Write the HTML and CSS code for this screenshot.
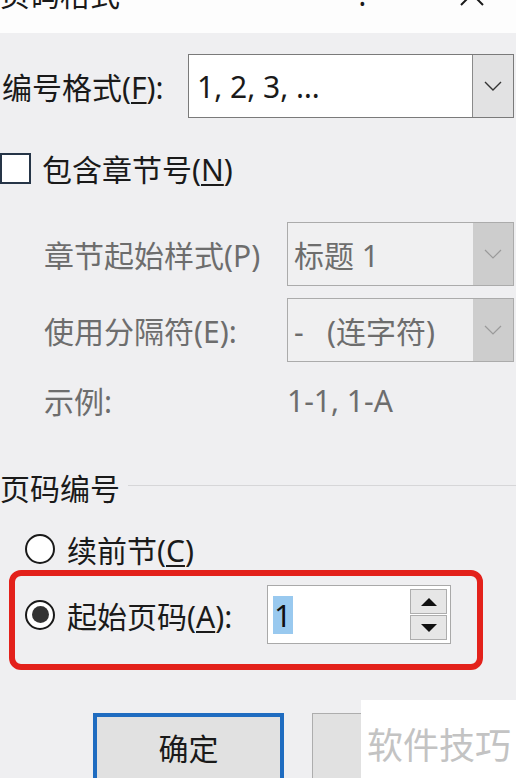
FILE: index.html
```html
<!DOCTYPE html>
<html lang="zh">
<head>
<meta charset="utf-8">
<title>页码格式</title>
<link rel="stylesheet" href="styles.css">
</head>
<body>
<div class="titlebar">
  <span class="title">页码格式</span>
  <span class="help">?</span>
  <span class="close"><svg width="24" height="24" viewBox="0 0 24 24"><path d="M1 1L23 23M23 1L1 23" stroke="#1a1a1a" stroke-width="2" fill="none"/></svg></span>
</div>
<div class="content">
  <div class="row row-format">
    <span class="lbl lbl-format">编号格式(<u>F</u>):</span>
    <div class="select select-main">
      <span class="val">1, 2, 3, …</span>
      <span class="drop drop-main"><svg width="18" height="10" viewBox="0 0 18 10"><path d="M1 1L9 9L17 1" stroke="#333" stroke-width="1.4" fill="none"/></svg></span>
    </div>
  </div>
  <div class="row row-check">
    <span class="checkbox"></span>
    <span class="lbl lbl-check">包含章节号(<u>N</u>)</span>
  </div>
  <div class="row row-sub row-style">
    <span class="lbl lbl-sub">章节起始样式(P)</span>
    <div class="select select-dis">
      <span class="val">标题 1</span>
      <span class="drop drop-dis"><svg width="18" height="10" viewBox="0 0 18 10"><path d="M1 1L9 9L17 1" stroke="#9a9a9a" stroke-width="1.2" fill="none"/></svg></span>
    </div>
  </div>
  <div class="row row-sub row-sep">
    <span class="lbl lbl-sub">使用分隔符(E):</span>
    <div class="select select-dis">
      <span class="val">-&nbsp;&nbsp;&nbsp;(连字符)</span>
      <span class="drop drop-dis"><svg width="18" height="10" viewBox="0 0 18 10"><path d="M1 1L9 9L17 1" stroke="#9a9a9a" stroke-width="1.2" fill="none"/></svg></span>
    </div>
  </div>
  <div class="row row-sub row-example">
    <span class="lbl lbl-sub">示例:</span>
    <span class="example">1-1, 1-A</span>
  </div>
  <div class="row row-group">
    <span class="group-title">页码编号</span>
    <span class="group-line"></span>
  </div>
  <div class="row row-radio">
    <span class="radio"></span>
    <span class="lbl lbl-radio">续前节(<u>C</u>)</span>
  </div>
  <div class="highlight">
    <div class="row row-start">
      <span class="radio checked"><span class="dot"></span></span>
      <span class="lbl lbl-radio lbl-start">起始页码(<u>A</u>):</span>
      <div class="spinner">
        <span class="sel">1</span>
        <div class="spin-btns">
          <span class="spin-btn"><svg width="16" height="8" viewBox="0 0 16 8"><path d="M0 8L8 0L16 8Z" fill="#111"/></svg></span>
          <span class="spin-btn"><svg width="16" height="8" viewBox="0 0 16 8"><path d="M0 0L16 0L8 8Z" fill="#111"/></svg></span>
        </div>
      </div>
    </div>
  </div>
  <div class="row row-buttons">
    <span class="btn btn-ok">确定</span>
    <span class="btn btn-cancel"></span>
  </div>
</div>
<div class="watermark">软件技巧</div>
</body>
</html>
```
FILE: styles.css
```css
html, body {
  margin: 0;
  padding: 0;
}
body {
  width: 516px;
  height: 778px;
  overflow: hidden;
  position: relative;
  background: #efeff1;
  font-family: "Noto Sans", "Noto Sans CJK SC", sans-serif;
  font-size: 30px;
  color: #1a1a1a;
}
u {
  text-decoration: underline;
  text-underline-offset: 3px;
  text-decoration-thickness: 1.5px;
}
.titlebar {
  height: 33px;
  background: #fdfdfd;
  display: flex;
  align-items: flex-start;
  overflow: hidden;
}
.title {
  flex: 1;
  line-height: 30px;
  margin-top: -20px;
  padding-left: 0;
}
.help {
  width: 103px;
  line-height: 30px;
  margin-top: -20px;
}
.close {
  width: 56px;
  margin-top: -18px;
  display: flex;
}
.content {
  display: flex;
  flex-direction: column;
}
.row {
  display: flex;
  align-items: center;
}
.row-format {
  height: 64px;
  margin-top: 21px;
  padding-left: 2px;
}
.lbl-format {
  width: 186px;
}
.select {
  box-sizing: border-box;
  height: 64px;
  display: flex;
  align-items: stretch;
  background: #ffffff;
  border: 1px solid #7a7a7a;
}
.select-main {
  width: 326px;
}
.val {
  flex: 1;
  display: flex;
  align-items: center;
  padding-left: 8px;
  white-space: nowrap;
}
.drop {
  width: 40px;
  display: flex;
  align-items: center;
  justify-content: center;
}
.drop-main {
  background: #e2e2e3;
  border-left: 1px solid #8a8a8a;
}
.row-check {
  height: 32px;
  margin-top: 34px;
}
.checkbox {
  box-sizing: border-box;
  width: 31px;
  height: 31px;
  background: #ffffff;
  border: 2px solid #263547;
}
.lbl-check {
  margin-left: 11px;
}
.row-sub {
  padding-left: 44px;
  color: #6d6d6d;
}
.lbl-sub {
  width: 243px;
  white-space: nowrap;
}
.row-style {
  height: 64px;
  margin-top: 38px;
}
.row-sep {
  height: 64px;
  margin-top: 12px;
}
.select-dis {
  width: 227px;
  background: #f0f0f1;
  border: 1px solid #ababab;
  color: #6d6d6d;
}
.select-dis .val {
  padding-left: 6px;
}
.drop-dis {
  background: #cdcdcd;
}
.row-example {
  height: 40px;
  margin-top: 18px;
}
.row-group {
  height: 40px;
  margin-top: 47px;
}
.group-title {
  white-space: nowrap;
}
.group-line {
  flex: 1;
  height: 1px;
  background: #d6d6d8;
  margin-left: 8px;
  margin-top: -4px;
}
.row-radio {
  height: 34px;
  margin-top: 25px;
  padding-left: 25px;
}
.radio {
  box-sizing: border-box;
  width: 30px;
  height: 30px;
  border: 2px solid #1a1a1a;
  border-radius: 50%;
  background: #ffffff;
  display: flex;
  align-items: center;
  justify-content: center;
}
.dot {
  width: 17px;
  height: 17px;
  border-radius: 50%;
  background: #333333;
}
.lbl-radio {
  margin-left: 12px;
}
.highlight {
  box-sizing: border-box;
  width: 474px;
  height: 100px;
  margin-top: 4px;
  margin-left: 9px;
  border: 6px solid #e3211b;
  border-radius: 12px;
  padding-top: 9px;
  padding-left: 10px;
}
.row-start {
  height: 59px;
}
.lbl-start {
  width: 200px;
}
.spinner {
  box-sizing: border-box;
  width: 184px;
  height: 59px;
  background: #ffffff;
  border: 1px solid #a9a9a9;
  display: flex;
  align-items: center;
}
.sel {
  margin-left: 5px;
  height: 38px;
  line-height: 38px;
  padding: 0 1px;
  background: #99c9ef;
  color: #111;
  font-size: 31px;
}
.spin-btns {
  margin-left: auto;
  margin-right: 3px;
  display: flex;
  flex-direction: column;
  gap: 1px;
}
.spin-btn {
  box-sizing: border-box;
  width: 37px;
  height: 25px;
  background: #e6e6e6;
  border: 1px solid #adadad;
  display: flex;
  align-items: center;
  justify-content: center;
}
.row-buttons {
  margin-top: 43px;
  padding-left: 93px;
  align-items: flex-start;
}
.btn {
  box-sizing: border-box;
  height: 72px;
  background: #e1e1e1;
  display: flex;
  align-items: center;
  justify-content: center;
}
.btn-ok {
  width: 196px;
  border: 4px solid #1f6cc0;
  padding-bottom: 4px;
}
.btn-cancel {
  width: 210px;
  margin-left: 28px;
  border: 1px solid #adadad;
}
.watermark {
  position: absolute;
  right: 0;
  bottom: 0;
  width: 155px;
  height: 78px;
  box-sizing: border-box;
  background: #ffffff;
  color: #c3c3c3;
  font-family: "Noto Sans CJK SC", sans-serif;
  font-size: 36px;
  line-height: 86px;
  padding-left: 6px;
  white-space: nowrap;
}
```
